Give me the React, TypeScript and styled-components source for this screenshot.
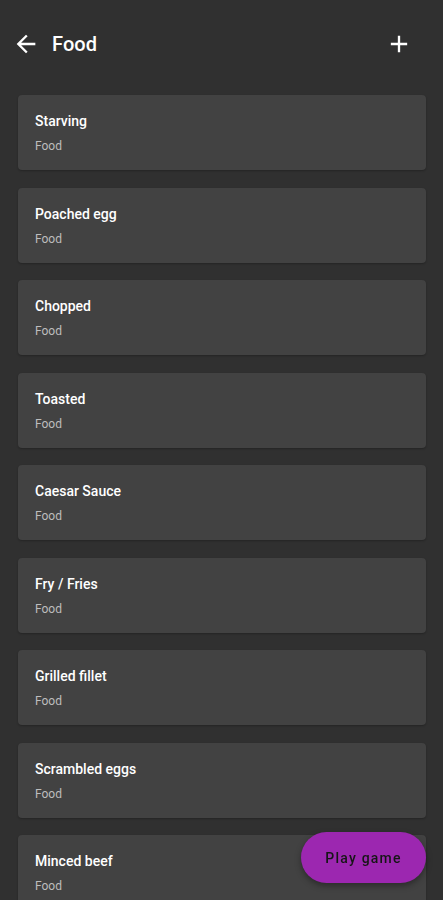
import React from "react";
import styled, { createGlobalStyle } from "styled-components";

const GlobalStyle = createGlobalStyle`
  body {
    margin: 0;
    background: #303030;
    font-family: Roboto, "Noto Sans", sans-serif;
    color: #ffffff;
  }
`;

const Page = styled.div`
  min-height: 900px;
  background: #303030;
`;

const Header = styled.header`
  height: 88px;
  display: flex;
  align-items: center;
  padding: 0 30px 0 12px;
`;

const IconButton = styled.button`
  width: 28px;
  height: 28px;
  padding: 0;
  border: none;
  background: transparent;
  color: #ffffff;
  display: flex;
  align-items: center;
  justify-content: center;
`;

const Title = styled.h1`
  flex: 1;
  margin: 0 0 0 12px;
  font-size: 20px;
  font-weight: 500;
  letter-spacing: 0.1px;
`;

const List = styled.div`
  display: flex;
  flex-direction: column;
  gap: 17.5px;
  padding: 7px 17px 0 18px;
`;

const Card = styled.div`
  background: #424242;
  border-radius: 4px;
  padding: 16px 17px 16px;
  box-shadow: 0 1px 2px rgba(0, 0, 0, 0.25);
`;

const CardTitle = styled.div`
  font-size: 14px;
  line-height: 20px;
  font-weight: 500;
  color: #ffffff;
`;

const CardSub = styled.div`
  margin-top: 7px;
  font-size: 12px;
  line-height: 16px;
  color: #bdbdbd;
`;

const Fab = styled.button`
  position: fixed;
  right: 17px;
  bottom: 17px;
  width: 125px;
  height: 51px;
  border: none;
  border-radius: 26px;
  background: #9c27b0;
  color: #161616;
  font-family: Roboto, sans-serif;
  font-size: 14px;
  font-weight: 500;
  letter-spacing: 1.2px;
  box-shadow: 0 3px 6px rgba(0, 0, 0, 0.35);
`;

const items = [
  "Starving",
  "Poached egg",
  "Chopped",
  "Toasted",
  "Caesar Sauce",
  "Fry / Fries",
  "Grilled fillet",
  "Scrambled eggs",
  "Minced beef",
];

export default function App() {
  return (
    <Page>
      <GlobalStyle />
      <Header>
        <IconButton aria-label="back">
          <svg width="28" height="28" viewBox="0 0 24 24" fill="currentColor">
            <path d="M20 11H7.83l5.59-5.59L12 4l-8 8 8 8 1.41-1.41L7.83 13H20v-2z" />
          </svg>
        </IconButton>
        <Title>Food</Title>
        <IconButton aria-label="add">
          <svg width="28" height="28" viewBox="0 0 24 24" fill="currentColor">
            <path d="M19 13h-6v6h-2v-6H5v-2h6V5h2v6h6v2z" />
          </svg>
        </IconButton>
      </Header>
      <List>
        {items.map((name) => (
          <Card key={name}>
            <CardTitle>{name}</CardTitle>
            <CardSub>Food</CardSub>
          </Card>
        ))}
      </List>
      <Fab>Play game</Fab>
    </Page>
  );
}
